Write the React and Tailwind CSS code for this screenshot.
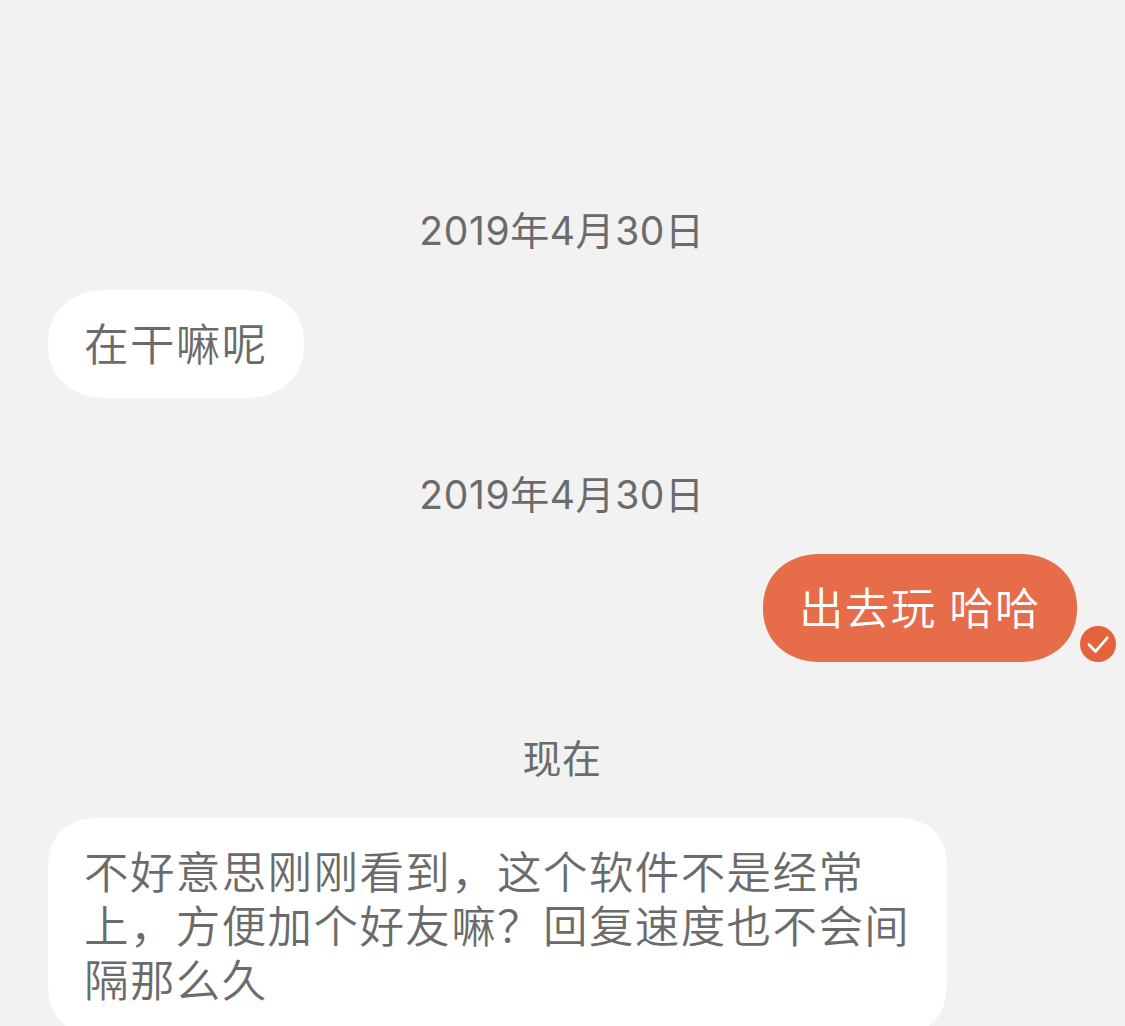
import React from "react";

const messages = [
  { id: 1, time: "2019年4月30日", text: "在干嘛呢", mine: false },
  { id: 2, time: "2019年4月30日", text: "出去玩 哈哈", mine: true },
  {
    id: 3,
    time: "现在",
    text: "不好意思刚刚看到，这个软件不是经常上，方便加个好友嘛？回复速度也不会间隔那么久",
    mine: false,
  },
];

function SentIcon() {
  return (
    <svg className="h-9 w-9 shrink-0" viewBox="0 0 36 36" fill="none">
      <circle cx="18" cy="18" r="18" fill="#e5633c" />
      <path
        d="M9 18.8 L15.6 25.4 L27.2 11.8"
        stroke="#fff"
        strokeWidth="2.8"
        strokeLinecap="round"
        strokeLinejoin="round"
      />
    </svg>
  );
}

function Message({ message }) {
  const { time, text, mine } = message;
  // one-line bubbles are full pills, longer ones get flatter corners
  const corners =
    text.length > 18
      ? "rounded-[54px] [corner-shape:superellipse(1.35)]"
      : "rounded-[58px/54px] [corner-shape:superellipse(1.12)]";

  return (
    <div className="flex flex-col">
      <div className="flex h-[60px] items-center justify-center pt-0.5 pr-px text-[39px] font-[375] leading-[60px] tracking-[0.6px] text-[#6b6b6b]">
        {time}
      </div>
      <div
        className={`mt-[30px] flex items-end ${
          mine ? "justify-end gap-[3px] pr-[9px]" : "pl-12"
        }`}
      >
        <div
          className={`max-w-[899px] px-9 pt-[28px] pb-[26px] text-[44.5px] font-[350] leading-[54px] tracking-[1.4px] [word-spacing:-1.4px] ${corners} ${
            mine ? "bg-[#e76c49] text-white" : "bg-white text-[#6b6b6b]"
          }`}
        >
          {text}
        </div>
        {mine && <SentIcon />}
      </div>
    </div>
  );
}

function App() {
  return (
    <div
      lang="zh-CN"
      className="flex h-[1026px] flex-col gap-[66px] overflow-hidden bg-[#f2f2f2] pt-[200px] font-[Inter,'Noto_Sans_CJK_SC',sans-serif]"
    >
      {messages.map((m) => (
        <Message key={m.id} message={m} />
      ))}
    </div>
  );
}

export default App;
